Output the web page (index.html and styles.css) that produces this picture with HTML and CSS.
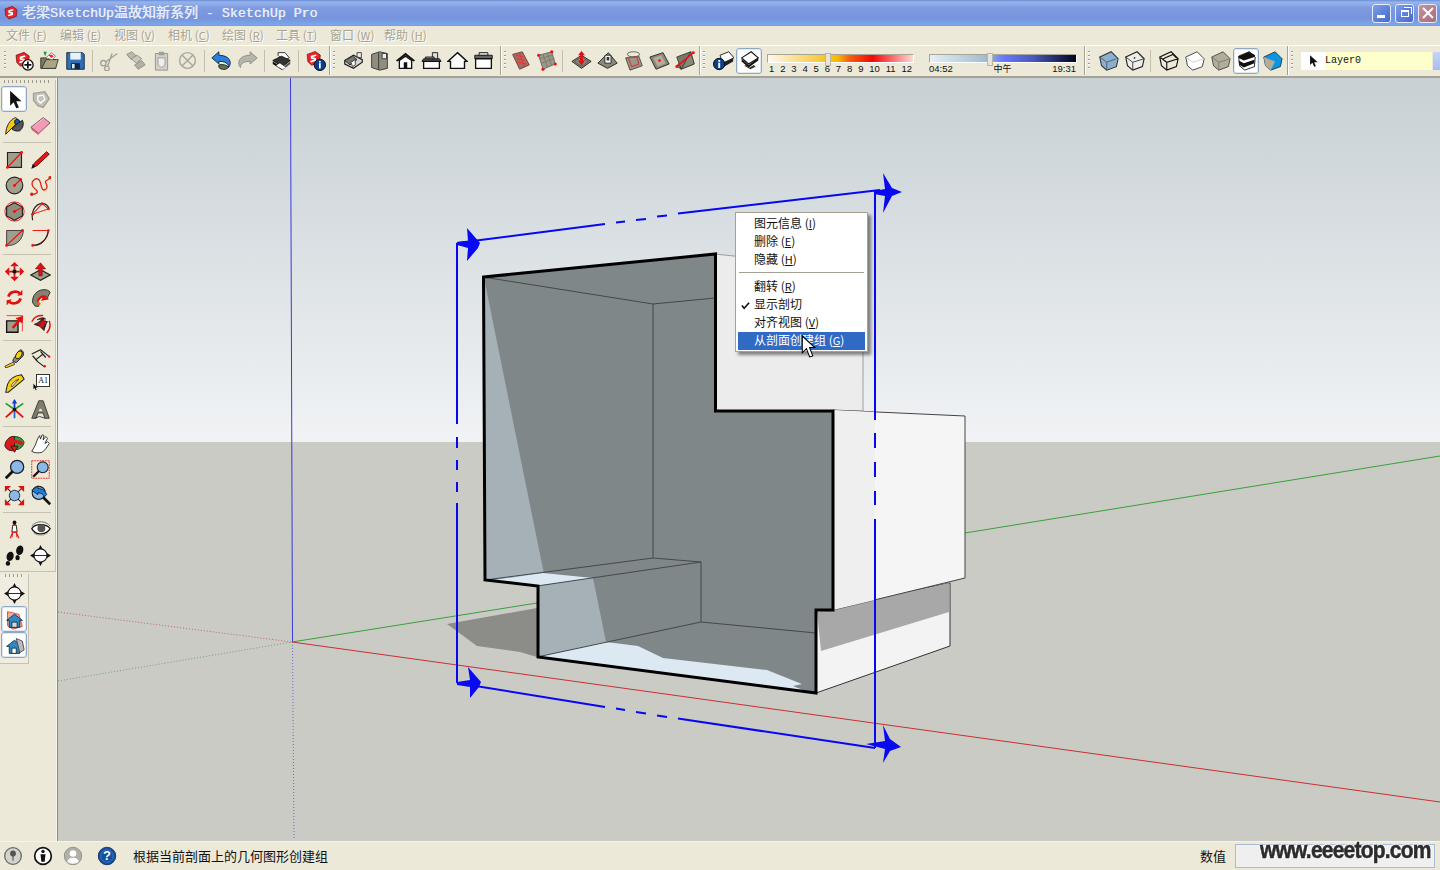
FILE: index.html
```html
<!DOCTYPE html>
<html lang="zh">
<head>
<meta charset="utf-8">
<title>老梁SketchUp温故知新系列 - SketchUp Pro</title>
<link rel="stylesheet" href="styles.css">
</head>
<body>
<svg class="defs" aria-hidden="true">
  <defs>
    <symbol id="su" viewBox="0 0 24 24"><path d="M3 6 14 2 21 7 20 17 9 21 4 16Z" fill="#e8242a" stroke="#7c1010"/><path d="M8 8 15 6 16 8 10 10 15 11 15 15 8 17 7 15 13 13 8 12Z" fill="#fff"/></symbol>
    <symbol id="new" viewBox="0 0 24 24"><use href="#su" width="20" height="20" x="1" y="1"/><circle cx="17" cy="17" r="6" fill="#fff" stroke="#111" stroke-width="1.5"/><path d="M17 13v8M13 17h8" stroke="#111" stroke-width="2"/></symbol>
    <symbol id="open" viewBox="0 0 24 24"><path d="M2 9h6l2 2h9v10H2Z" fill="#7d7a5a" stroke="#333"/><path d="M8 11 22 11 19 21H3Z" fill="#a9a57e" stroke="#333"/><path d="M8 9 14 3l5 4-4 4Z" fill="#fff" stroke="#777"/><path d="M11 6l3 3 3-2-3-2Z" fill="#e22"/><path d="M5 2l2 5 2-5Z" fill="#2a8c3c"/></symbol>
    <symbol id="save" viewBox="0 0 24 24"><path d="M2 3h18l2 2v17H2Z" fill="#2f6fb5" stroke="#123"/><path d="M6 3h12v8H6Z" fill="#e8f2f8"/><path d="M7 15h10v7H7Z" fill="#0c2746"/><path d="M8 16h3v5H8Z" fill="#dfe8ee"/></symbol>
    <symbol id="cut" viewBox="0 0 24 24" fill="none" stroke="#a3a39a" stroke-width="1.6"><circle cx="5" cy="15" r="3"/><circle cx="9" cy="21" r="2.6"/><path d="M7 14 21 4M10 18 15 4"/></symbol>
    <symbol id="copy" viewBox="0 0 24 24"><path d="M2 5 8 2l5 5-6 4Z" fill="#b9b9ae" stroke="#8a8a80"/><path d="M7 10l7-4 5 4-6 5Z" fill="#c9c9bf" stroke="#8a8a80"/><path d="M11 17l8-5 4 5-8 5Z" fill="#b0b0a5" stroke="#8a8a80"/></symbol>
    <symbol id="paste" viewBox="0 0 24 24"><path d="M5 4h14v19H5Z" fill="#d0d0c6" stroke="#8f8f85"/><path d="M9 2h6v4H9Z" fill="#9e9e94"/><path d="M8 9h8v8l-4 3-4-3Z" fill="#eee" stroke="#999"/></symbol>
    <symbol id="del" viewBox="0 0 24 24" fill="none" stroke="#a9a99f" stroke-width="1.7"><circle cx="12" cy="12" r="9"/><path d="M6 6 18 18M18 6 6 18"/></symbol>
    <symbol id="undo" viewBox="0 0 24 24"><path d="M1 9 9 2v4c7 0 13 3 13 9 0 2-1 4-2 5 0-5-4-7-11-7v3Z" fill="#2b7fd8" stroke="#123"/><path d="M9 17c5-1 9 0 11 3-3 3-8 3-11 0Z" fill="#5f6f4f" stroke="#222"/></symbol>
    <symbol id="redo" viewBox="0 0 24 24"><path d="M23 9 15 2v4C8 6 2 9 2 15c0 2 1 4 2 5 0-5 4-7 11-7v3Z" fill="#b6b6ae" stroke="#8a8a82"/></symbol>
    <symbol id="print" viewBox="0 0 24 24"><path d="M8 3h8l5 6-7 3-6-6Z" fill="#fff" stroke="#222"/><path d="M2 12 12 7l10 5-9 7Z" fill="#333" stroke="#111"/><path d="M2 13l11 7v3L2 16Z" fill="#111"/><path d="M13 20l9-7v3l-9 7Z" fill="#555"/><path d="M6 18l7 4 4-2-7-5Z" fill="#fff"/></symbol>
    <symbol id="suinfo" viewBox="0 0 24 24"><use href="#su" width="20" height="20" x="0" y="0"/><circle cx="17" cy="17" r="6.5" fill="#0c3f8a" stroke="#001"/><rect x="16" y="15" width="2" height="6" fill="#fff"/><rect x="16" y="12.5" width="2" height="1.8" fill="#fff"/></symbol>
    <symbol id="viso" viewBox="0 0 24 24"><path d="M2 12 12 6l10 5v3L12 21 2 16Z" fill="#d8d8cf" stroke="#222" stroke-width="1.4"/><path d="M2 12 11 7l5 4-8 6Z" fill="#777" stroke="#222"/><path d="M16 3h5v6l-5-1Z" fill="#eee" stroke="#333"/><path d="M9 14l5-3v6l-3 2Z" fill="#fff" stroke="#333"/></symbol>
    <symbol id="vside" viewBox="0 0 24 24"><path d="M3 5 12 2 21 4V21L12 23 3 20Z" fill="#8e8d7e" stroke="#333"/><path d="M11 3v19" stroke="#333"/><path d="M15 4h5v6h-5Z" fill="#eee" stroke="#333"/></symbol>
    <symbol id="vfront" viewBox="0 0 24 24"><path d="M1 12 12 3l11 9-2 1-9-7-9 7Z" fill="#111"/><path d="M5 12 12 7l7 5v9H5Z" fill="#fff" stroke="#111" stroke-width="1.5"/><path d="M10 14h4v7h-4Z" fill="#111"/></symbol>
    <symbol id="vtop" viewBox="0 0 24 24"><path d="M3 10h18l2 3H1Z" fill="#555" stroke="#111"/><path d="M3 13h18v8H3Z" fill="#fff" stroke="#111" stroke-width="1.5"/><path d="M13 3h6v7h-6Z" fill="#ddd" stroke="#111"/><path d="M5 8h10v2H5Z" fill="#999" stroke="#111"/></symbol>
    <symbol id="vhouse" viewBox="0 0 24 24"><path d="M12 3 23 13h-3v8H4v-8H1Z" fill="#fff" stroke="#111" stroke-width="1.6"/></symbol>
    <symbol id="vbox" viewBox="0 0 24 24"><path d="M2 6h20v4H2Z" fill="#666" stroke="#111"/><path d="M3 10h18v11H3Z" fill="#fff" stroke="#111" stroke-width="1.5"/><path d="M7 3h10v3H7Z" fill="#ddd" stroke="#111"/></symbol>
    <symbol id="sbmesh" viewBox="0 0 24 24"><path d="M3 5 14 2l8 15-11 5Z" fill="#a86a62" stroke="#6b3a36"/><path d="M7 6l8 2M8 10l9 2M9 14l10 2M11 4l5 15" stroke="#e33" stroke-width="1.2"/></symbol>
    <symbol id="sbgrid" viewBox="0 0 24 24"><path d="M3 6 18 2l4 14-14 6Z" fill="#9c9a86" stroke="#666"/><path d="M8 5l5 14M13 4l5 14M4 10l15-4M6 15l15-5" stroke="#77776a"/><g fill="#e11"><circle cx="3" cy="6" r="1.8"/><circle cx="18" cy="2" r="1.8"/><circle cx="22" cy="16" r="1.8"/><circle cx="8" cy="22" r="1.8"/></g></symbol>
    <symbol id="sbup" viewBox="0 0 24 24"><path d="M1 13 12 6l11 7-11 8Z" fill="#8a8878" stroke="#222"/><path d="M4 13 12 8l8 5-8 6Z" fill="none" stroke="#555"/><path d="M12 1l4 5h-2.500v6H16l-4 6-4-6h2.500V6H8Z" fill="#e01010"/></symbol>
    <symbol id="sbflip" viewBox="0 0 24 24"><path d="M1 15 13 3l10 12-11 6Z" fill="#8a8878" stroke="#222"/><path d="M9 6h7v9H9Z" fill="#fff" stroke="#222"/><path d="M11 8h3v4h-3Z" fill="#333"/></symbol>
    <symbol id="sbdrape" viewBox="0 0 24 24"><path d="M3 9 18 7l4 11-14 5Z" fill="#9a9788" stroke="#444"/><ellipse cx="12" cy="5" rx="7" ry="3" fill="none" stroke="#555"/><path d="M6 9l10-1 2 8-8 3Z" fill="none" stroke="#c44" stroke-width="1.4"/></symbol>
    <symbol id="sbdetail" viewBox="0 0 24 24"><path d="M1 8 16 3l7 13-15 6Z" fill="#8a8878" stroke="#222"/><path d="M5 9l9-3 5 9-9 4Z" fill="#b1ad9a"/><circle cx="12" cy="12" r="1.500" fill="#e11"/></symbol>
    <symbol id="sbedge" viewBox="0 0 24 24"><path d="M2 18 18 2l4 14-15 6Z" fill="#8a8878" stroke="#222"/><path d="M2 8 18 2 7 22Z" fill="#7a7869" stroke="#333"/><path d="M2 19 21 3" stroke="#e11" stroke-width="1.8"/><circle cx="2" cy="19" r="1.700" fill="#e11"/><circle cx="21" cy="3" r="1.700" fill="#e11"/></symbol>
    <symbol id="shinfo" viewBox="0 0 24 24"><path d="M8 6 18 2l6 7-13 6Z" fill="#fff" stroke="#111"/><path d="M9 16l14-7v4l-12 7Z" fill="#222"/><circle cx="7" cy="16" r="6.500" fill="#0c3f8a" stroke="#001"/><rect x="6" y="14.500" width="2.200" height="6" fill="#fff"/><rect x="6" y="11.500" width="2.200" height="2" fill="#fff"/></symbol>
    <symbol id="shadow" viewBox="0 0 24 24"><path d="M3 9 14 2l8 7-11 7Z" fill="#fff" stroke="#111" stroke-width="1.300"/><path d="M3 10l8 7v3L3 13ZM11 17l11-8v3l-11 8Z" fill="#111"/><path d="M6 18l7 4 6-3-2-2-5 3-4-3Z" fill="#333"/></symbol>
    <symbol id="cubeblue" viewBox="0 0 24 24"><path d="M2 8 15 2l8 8-2 9-11 4-6-5Z" fill="#8ab0cf" stroke="#333" stroke-width="1.200"/><path d="M2 8 10 14l11-4M10 14v9" fill="none" stroke="#556"/></symbol>
    <symbol id="cubewhite" viewBox="0 0 24 24"><path d="M2 8 15 2l8 8-2 9-11 4-6-5Z" fill="#eeeeea" stroke="#222" stroke-width="1.300"/><path d="M2 8 10 14l13-4M10 14v9" fill="none" stroke="#333"/><circle cx="12" cy="9" r="1" fill="#333"/></symbol>
    <symbol id="cubewire" viewBox="0 0 24 24"><path d="M2 8 15 2l8 8-2 9-11 4-6-5Z M2 8 10 14l13-4M10 14v9M6 10l11-5 4 4" fill="none" stroke="#111" stroke-width="1.300"/></symbol>
    <symbol id="cubehid" viewBox="0 0 24 24"><path d="M2 8 15 2l8 8-2 9-11 4-6-5Z" fill="#fff" stroke="#333" stroke-width="1"/><path d="M2 8 10 14l13-4" fill="none" stroke="#ccc"/></symbol>
    <symbol id="cubegray" viewBox="0 0 24 24"><path d="M2 8 15 2l8 8-2 9-11 4-6-5Z" fill="#b1ad98" stroke="#444"/><path d="M2 8 10 14l13-4M10 14v9" fill="none" stroke="#777"/></symbol>
    <symbol id="cubestripe" viewBox="0 0 24 24"><path d="M3 7 15 2l7 6-1 11-11 4-6-5Z" fill="#fff" stroke="#111"/><path d="M3 7 15 2l7 4-1 2-12 4-6-3ZM3 12l6 3 12-4v4L9 20l-5-3Z" fill="#111"/></symbol>
    <symbol id="cubemono" viewBox="0 0 24 24"><path d="M2 8 15 2l8 8-2 9-11 4-6-5Z" fill="#0c95e0" stroke="#333"/><path d="M2 8 15 13 10 23 4 18Z" fill="#b1ad98"/></symbol>
    <symbol id="arrow" viewBox="0 0 24 24"><path d="M7 2v17l4-4 3 7 3-1-3-7h6Z" fill="#111"/></symbol>
    <symbol id="comp" viewBox="0 0 24 24"><path d="M4 5 17 3l5 8-7 10-6-2-5-6Z" fill="#c2c2b8" stroke="#9f9f95" stroke-width="1.500"/><path d="M9 8l6-1 2 5-5 4-3-3Z" fill="none" stroke="#fff" stroke-width="1.500"/></symbol>
    <symbol id="paint" viewBox="0 0 24 24"><path d="M2 22c0-9 5-17 11-19 3 1 3 3 3 5l-8 8Z" fill="#f3c71a" stroke="#111"/><circle cx="15" cy="8" r="3" fill="#1858b8" stroke="#111"/><path d="M14 11l7-5c2 4 1 9-3 12-3 1-7 0-9-2Z" fill="#555" stroke="#111"/></symbol>
    <symbol id="erase" viewBox="0 0 24 24"><path d="M1 14 15 3l8 6L10 21Z" fill="#f39ab6" stroke="#7c4a58"/><path d="M1 14l9 7v2L2 17Z" fill="#c66"/><path d="M5 12 16 4" stroke="#fbd" fill="none"/></symbol>
    <symbol id="rect" viewBox="0 0 24 24"><path d="M4 4h16v17H4Z" fill="#a09f8c" stroke="#222" stroke-width="1.300"/><path d="M4 21 20 4" stroke="#e11" stroke-width="1.400"/><circle cx="4" cy="21" r="1.700" fill="#e11"/><circle cx="20" cy="4" r="1.700" fill="#e11"/></symbol>
    <symbol id="pencil" viewBox="0 0 24 24"><path d="M2 22 5 16 19 3l3 3L8 19Z" fill="#e11" stroke="#411"/><path d="M2 22l1-5 3 3Z" fill="#111"/></symbol>
    <symbol id="circle" viewBox="0 0 24 24"><circle cx="12" cy="12" r="9.500" fill="#a09f8c" stroke="#222" stroke-width="1.300"/><path d="M12 12 19 5" stroke="#e11" stroke-width="1.300"/><circle cx="12" cy="12" r="1.700" fill="#e11"/><circle cx="19" cy="5" r="1.700" fill="#e11"/></symbol>
    <symbol id="free" viewBox="0 0 24 24" fill="none" stroke="#d21" stroke-width="1.500"><path d="M2 22c7 0 8-3 4-6S1 9 4 6s7-2 8 3 2 9 5 8 3-5 1-8 4-3 5-6"/><circle cx="2" cy="22" r="1.200" fill="#e11"/><circle cx="23" cy="3" r="1.200" fill="#e11"/></symbol>
    <symbol id="poly" viewBox="0 0 24 24"><circle cx="12" cy="12" r="11" fill="none" stroke="#e11"/><path d="M12 2 21 7v10l-9 5-9-5V7Z" fill="#8f8e7c" stroke="#222" stroke-width="1.300"/><path d="M12 12 21 7" stroke="#e11" stroke-width="1.200"/><circle cx="12" cy="12" r="1.700" fill="#e11"/></symbol>
    <symbol id="arc1" viewBox="0 0 24 24"><path d="M3 22C1 12 6 3 14 3c4 0 7 3 8 6" fill="none" stroke="#222" stroke-width="1.300"/><path d="M3 15 14 3l7 6Z" fill="none" stroke="#e11" stroke-width="1.200"/><circle cx="14" cy="3" r="1.500" fill="#e11"/><circle cx="21" cy="9" r="1.500" fill="#e11"/><circle cx="3" cy="15" r="1.500" fill="#e11"/></symbol>
    <symbol id="arc2" viewBox="0 0 24 24"><path d="M3 4H22C22 14 14 21 6 21H3Z" fill="#a09f8c" stroke="#333"/><path d="M3 21 21 4" stroke="#e11" stroke-width="1.300"/><circle cx="3" cy="21" r="1.600" fill="#e11"/><circle cx="21" cy="4" r="1.600" fill="#e11"/></symbol>
    <symbol id="arc3" viewBox="0 0 24 24"><path d="M3 21H6C14 21 20 13 21 4H3" fill="none" stroke="#e11" stroke-width="1.100"/><path d="M3 21C12 21 20 14 21 4" fill="none" stroke="#222" stroke-width="1.400"/><circle cx="3" cy="21" r="1.500" fill="#e11"/><circle cx="21" cy="4" r="1.500" fill="#e11"/></symbol>
    <symbol id="move" viewBox="0 0 24 24" fill="#e01010"><path d="M12 1l5 5H7ZM12 23l5-5H7ZM1 12l5-5v10ZM23 12l-5-5v10Z"/><path d="M11 6h2v12h-2ZM6 11h12v2H6Z" fill="#c01010"/><path d="M10 10h4v4h-4Z" fill="#111"/></symbol>
    <symbol id="push" viewBox="0 0 24 24"><path d="M1 16 12 10l11 6-11 6Z" fill="#a09f8c" stroke="#222" stroke-width="1.300"/><path d="M12 2l6 7h-4v8h-4V9H6Z" fill="#e01010" stroke="#411" stroke-width=".5"/></symbol>
    <symbol id="rotate" viewBox="0 0 24 24" fill="none" stroke="#e01010" stroke-width="3"><path d="M5 11a8 7 0 0 1 13-4M19 13a8 7 0 0 1-13 4"/><path d="M15 10l6-1V3ZM9 14l-6 1v6Z" fill="#e01010" stroke="none"/></symbol>
    <symbol id="follow" viewBox="0 0 24 24"><path d="M3 18C2 10 8 3 16 3c3 0 6 1 7 3l-3 6c-4-2-9-1-11 5l1 5H6Z" fill="#85836f" stroke="#222"/><path d="M9 16c1-4 5-6 8-5l-2 3 6-1" fill="none" stroke="#e01010" stroke-width="2.500"/><circle cx="10" cy="19" r="2" fill="#e60"/></symbol>
    <symbol id="scale" viewBox="0 0 24 24"><path d="M3 9h13v13H3Z" fill="#a09f8c" stroke="#111" stroke-width="1.500"/><path d="M3 3h18v18" fill="none" stroke="#e33"/><path d="M9 16 16 8l-3-2 9-3-1 9-3-2-7 8Z" fill="#e01010"/></symbol>
    <symbol id="offset" viewBox="0 0 24 24"><path d="M2 10C4 5 10 2 15 3M22 9c2 6 0 11-3 14" fill="none" stroke="#e01010" stroke-width="1.600"/><path d="M8 8c4-3 8-3 10-1M18 9c1 3 0 6-2 9M5 13l6 2 5 5 1-7 3-3-5-1 1-3-7 5Z" fill="#8f2020" stroke="#111"/><path d="M11 14l7-7-2 6 2 1-6 2Z" fill="#e01010"/></symbol>
    <symbol id="tape" viewBox="0 0 24 24"><path d="M11 13 19 3c3 1 4 4 3 7l-8 8-4-2Z" fill="#8c8b77" stroke="#222"/><ellipse cx="17" cy="9" rx="3" ry="5" transform="rotate(30 17 9)" fill="#f3d11a" stroke="#111"/><path d="M1 22 11 17l1 3-10 4Z" fill="#f3d11a" stroke="#333"/></symbol>
    <symbol id="dim" viewBox="0 0 24 24" fill="none" stroke="#222" stroke-width="1.400"><path d="M2 8 12 3l10 8M6 15l9-7M3 10l6 7M12 5l6 7M9 17l8 6"/><circle cx="22" cy="11" r="1.300" fill="#e11" stroke="none"/><circle cx="17" cy="22" r="1.300" fill="#e11" stroke="none"/></symbol>
    <symbol id="proto" viewBox="0 0 24 24"><path d="M2 22 4 13C6 7 12 3 20 2l3 5-18 15Z" fill="#f3d11a" stroke="#222" stroke-width="1.200"/><path d="M8 15c1-3 4-6 9-8l-8 9Z" fill="#eee" stroke="#222" stroke-width=".8"/></symbol>
    <symbol id="axes" viewBox="0 0 24 24" stroke-width="2"><path d="M12 12 2 5" stroke="#2a9c35"/><path d="M12 12 22 5" stroke="#2a9c35"/><path d="M12 12 2 21" stroke="#e01010"/><path d="M12 12 22 21" stroke="#e01010"/><path d="M12 12V2" stroke="#0a3dd8"/><path d="M12 12v10" stroke="#1a6ad8"/><path d="M12 0l3 5H9Z" fill="#0a3dd8"/><circle cx="12" cy="12" r="2" fill="#111"/></symbol>
    <symbol id="text3d" viewBox="0 0 24 24"><path d="M2 22 10 2h5l7 20h-5l-2-6H9l-2 6Z" fill="#7f7e6e" stroke="#333"/><path d="M11 11h2l1 3h-4Z" fill="#e8e5d8"/><path d="M5 22l6-2 6 2" stroke="#333" fill="none"/></symbol>
    <symbol id="orbit" viewBox="0 0 24 24"><path d="M1 14C2 7 8 3 12 4v16C7 21 2 19 1 14Z" fill="#d81c1c" stroke="#311"/><path d="M12 4c6 0 10 3 11 7-1 4-4 7-8 8l-3-1Z" fill="#2f9c45" stroke="#131"/><path d="M3 9c4-2 16-2 19 2l-2 3c-5-3-12-3-16-1Z" fill="#d81c1c"/><path d="M12 22l4-7H8Z" fill="#d81c1c" stroke="#311"/></symbol>
    <symbol id="hand" viewBox="0 0 24 24"><path d="M2 21 6 14 9 6l2-3 1 4 2-5 2 1-1 5 3-4 2 2-3 6 3-2 2 2-4 6-4 4c-4 1-9 1-12-1Z" fill="#fff" stroke="#222"/></symbol>
    <symbol id="zoom" viewBox="0 0 24 24"><circle cx="15" cy="9" r="7.500" fill="#8ab8e8" stroke="#222" stroke-width="1.500"/><path d="M10 14 2 22" stroke="#111" stroke-width="3.200"/></symbol>
    <symbol id="zoomw" viewBox="0 0 24 24"><path d="M2 2h20v20H2Z" fill="none" stroke="#e11" stroke-dasharray="2 1"/><use href="#zoom" width="20" height="20" x="2" y="2"/></symbol>
    <symbol id="zoome" viewBox="0 0 24 24"><circle cx="12" cy="12" r="6" fill="#8ab8e8" stroke="#222"/><g stroke="#111" stroke-width="1.200"><path d="M8 8 2 2M16 8l6-6M8 16l-6 6M16 16l6 6"/></g><g fill="#e01010"><path d="M1 1h7L1 8ZM23 1h-7l7 7ZM1 23h7l-7-7ZM23 23h-7l7-7Z"/></g></symbol>
    <symbol id="zoomp" viewBox="0 0 24 24"><circle cx="10" cy="9" r="7.500" fill="#8ab8e8" stroke="#222" stroke-width="1.300"/><path d="M15 14l8 8" stroke="#111" stroke-width="3"/><path d="M2 6 9 1v3c5 0 9 3 10 7l-3 3c0-3-3-5-7-5v2Z" fill="#1f7fdc" stroke="#123"/></symbol>
    <symbol id="person" viewBox="0 0 24 24"><path d="M9 21 12 3l3 18" fill="none" stroke="#e11" stroke-width="1.200"/><circle cx="12" cy="4" r="2.200" fill="#111"/><path d="M10 7h4l1 8h-6Z" fill="#fff" stroke="#111"/><path d="M7 22l3-7h4l3 7" fill="none" stroke="#e11" stroke-width="1.200"/></symbol>
    <symbol id="eye" viewBox="0 0 24 24"><path d="M2 11C6 5 18 5 23 11c-4 7-16 9-21 0Z" fill="#fff" stroke="#111" stroke-width="1.400"/><circle cx="13" cy="10.500" r="4.500" fill="#555"/><path d="M2 8C8 1 18 2 23 8" stroke="#666" fill="none"/><path d="M4 16c6 4 13 3 17-1" stroke="#999" fill="none"/></symbol>
    <symbol id="feet" viewBox="0 0 24 24" fill="#111"><ellipse cx="7" cy="13" rx="4" ry="5.500" transform="rotate(15 7 13)"/><ellipse cx="4.500" cy="21" rx="2.500" ry="2.800"/><ellipse cx="18" cy="6" rx="4" ry="5.500" transform="rotate(15 18 6)"/><ellipse cx="15.500" cy="14.500" rx="2.500" ry="3"/></symbol>
    <symbol id="sect" viewBox="0 0 24 24"><path d="M12 0l3 6h-6ZM12 24l3-6H9ZM0 12l5-3v6ZM24 12l-5-3v6Z" fill="#111"/><circle cx="12" cy="12" r="7.500" fill="#fff" stroke="#111" stroke-width="1.300"/><path d="M4 12h16" stroke="#111"/></symbol>
    <symbol id="sshow" viewBox="0 0 24 24"><path d="M4 3 17 6l4 14-11 3-6-4Z" fill="#f0a898" stroke="#d05040"/><path d="M3 13 12 6l9 7h-3v8H6v-8Z" fill="#2f86c8" stroke="#133"/><path d="M9 15h6v6H9Z" fill="#cfd8df" stroke="#133"/></symbol>
    <symbol id="scut" viewBox="0 0 24 24"><path d="M3 13 12 6l9 7h-3v8H6v-8Z" fill="#2f86c8" stroke="#133"/><path d="M14 4l7 3 2 10-5 3Z" fill="#bbb" stroke="#444"/><path d="M9 15h5v6H9Z" fill="#fff" stroke="#133"/></symbol>
    <symbol id="geo" viewBox="0 0 24 24"><circle cx="12" cy="12" r="10" fill="#d4d4cc" stroke="#666" stroke-width="1.500"/><circle cx="12" cy="9" r="3.500" fill="#555"/><path d="M11 9h2l-.5 9h-1Z" fill="#555"/></symbol>
    <symbol id="cred" viewBox="0 0 24 24"><circle cx="12" cy="12" r="10" fill="#fff" stroke="#111" stroke-width="2"/><circle cx="12" cy="6.500" r="2" fill="#111"/><path d="M9 10h6l-1 9h-4Z" fill="#111"/></symbol>
    <symbol id="user" viewBox="0 0 24 24"><circle cx="12" cy="12" r="10.500" fill="#b0b0a8" stroke="#888"/><circle cx="12" cy="9" r="4" fill="#fff"/><path d="M5 19c1-4 4-5 7-5s6 1 7 5c-3 3-11 3-14 0Z" fill="#fff"/></symbol>
    <symbol id="help" viewBox="0 0 24 24"><circle cx="12" cy="12" r="10.500" fill="#14509e" stroke="#0a2a66"/><circle cx="12" cy="12" r="7.500" fill="none" stroke="#4a86cc" stroke-width=".8"/></symbol>
    <symbol id="chk" viewBox="0 0 10 10"><path d="M1 5l2.500 3L9 2" fill="none" stroke="#111" stroke-width="1.800"/></symbol>
  </defs>
</svg>

<header class="titlebar">
  <svg class="ti"><use href="#su"/></svg>
  <h1 class="ttl">老梁<span class="lat">SketchUp</span>温故知新系列<span class="lat"> - SketchUp Pro</span></h1>
  <div class="wbtns">
    <button class="wb blue"><span class="g-min"></span></button>
    <button class="wb blue"><span class="g-res"></span></button>
    <button class="wb red"><svg viewBox="0 0 12 12" class="g-x"><path d="M1 1l10 10M11 1 1 11" stroke="#fff" stroke-width="2"/></svg></button>
  </div>
</header>

<nav class="menubar">
  <span class="mi">文件 (<u>F</u>)</span><span class="mi">编辑 (<u>E</u>)</span><span class="mi">视图 (<u>V</u>)</span><span class="mi">相机 (<u>C</u>)</span><span class="mi">绘图 (<u>R</u>)</span><span class="mi">工具 (<u>T</u>)</span><span class="mi">窗口 (<u>W</u>)</span><span class="mi">帮助 (<u>H</u>)</span>
</nav>

<div class="toolbar">
  <div class="tg g1">
    <i class="grip"></i>
    <span class="b"><svg><use href="#new"/></svg></span><span class="b"><svg><use href="#open"/></svg></span><span class="b"><svg><use href="#save"/></svg></span>
    <i class="sep"></i>
    <span class="b"><svg><use href="#cut"/></svg></span><span class="b"><svg><use href="#copy"/></svg></span><span class="b"><svg><use href="#paste"/></svg></span><span class="b"><svg><use href="#del"/></svg></span>
    <i class="sep"></i>
    <span class="b"><svg><use href="#undo"/></svg></span><span class="b"><svg><use href="#redo"/></svg></span>
    <i class="sep"></i>
    <span class="b"><svg><use href="#print"/></svg></span>
    <i class="sep"></i>
    <span class="b"><svg><use href="#suinfo"/></svg></span>
  </div>
  <div class="tg g2">
    <i class="grip"></i>
    <span class="b"><svg><use href="#viso"/></svg></span><span class="b"><svg><use href="#vside"/></svg></span><span class="b"><svg><use href="#vfront"/></svg></span><span class="b"><svg><use href="#vtop"/></svg></span><span class="b"><svg><use href="#vhouse"/></svg></span><span class="b"><svg><use href="#vbox"/></svg></span>
  </div>
  <div class="tg g3">
    <i class="grip"></i>
    <span class="b"><svg><use href="#sbmesh"/></svg></span><span class="b"><svg><use href="#sbgrid"/></svg></span>
    <i class="sep"></i>
    <span class="b"><svg><use href="#sbup"/></svg></span><span class="b"><svg><use href="#sbflip"/></svg></span><span class="b"><svg><use href="#sbdrape"/></svg></span><span class="b"><svg><use href="#sbdetail"/></svg></span><span class="b"><svg><use href="#sbedge"/></svg></span>
  </div>
  <div class="tg g4">
    <i class="grip"></i>
    <span class="b"><svg><use href="#shinfo"/></svg></span><span class="b on"><svg><use href="#shadow"/></svg></span>
    <div class="slider s-month">
      <div class="track"><i class="thumb"></i></div>
      <div class="nums"><span>1</span><span>2</span><span>3</span><span>4</span><span>5</span><span>6</span><span>7</span><span>8</span><span>9</span><span>10</span><span>11</span><span>12</span></div>
    </div>
    <div class="slider s-time">
      <div class="track"><i class="thumb"></i></div>
      <div class="nums"><span>04:52</span><span class="noon">中午</span><span>19:31</span></div>
    </div>
  </div>
  <div class="tg g5">
    <i class="grip"></i>
    <span class="b"><svg><use href="#cubeblue"/></svg></span><span class="b"><svg><use href="#cubewhite"/></svg></span>
    <i class="sep"></i>
    <span class="b"><svg><use href="#cubewire"/></svg></span><span class="b"><svg><use href="#cubehid"/></svg></span><span class="b"><svg><use href="#cubegray"/></svg></span><span class="b on"><svg><use href="#cubestripe"/></svg></span><span class="b"><svg><use href="#cubemono"/></svg></span>
  </div>
  <div class="tg g6">
    <i class="grip"></i>
    <div class="layer">
      <span class="larrow"><svg><use href="#arrow"/></svg></span>
      <span class="lname">Layer0</span>
    </div>
    <span class="ldrop"></span>
  </div>
</div>

<main class="work">
  <aside class="side">
    <div class="palette large">
      <i class="hgrip"></i>
      <div class="rows">
        <span class="b on"><svg><use href="#arrow"/></svg></span><span class="b"><svg><use href="#comp"/></svg></span>
        <span class="b"><svg><use href="#paint"/></svg></span><span class="b"><svg><use href="#erase"/></svg></span>
        <i class="hsep"></i>
        <span class="b"><svg><use href="#rect"/></svg></span><span class="b"><svg><use href="#pencil"/></svg></span>
        <span class="b"><svg><use href="#circle"/></svg></span><span class="b"><svg><use href="#free"/></svg></span>
        <span class="b"><svg><use href="#poly"/></svg></span><span class="b"><svg><use href="#arc1"/></svg></span>
        <span class="b"><svg><use href="#arc2"/></svg></span><span class="b"><svg><use href="#arc3"/></svg></span>
        <i class="hsep"></i>
        <span class="b"><svg><use href="#move"/></svg></span><span class="b"><svg><use href="#push"/></svg></span>
        <span class="b"><svg><use href="#rotate"/></svg></span><span class="b"><svg><use href="#follow"/></svg></span>
        <span class="b"><svg><use href="#scale"/></svg></span><span class="b"><svg><use href="#offset"/></svg></span>
        <i class="hsep"></i>
        <span class="b"><svg><use href="#tape"/></svg></span><span class="b"><svg><use href="#dim"/></svg></span>
        <span class="b"><svg><use href="#proto"/></svg></span><span class="b textb"><svg class="small"><use href="#arrow"/></svg><em>A1</em></span>
        <span class="b"><svg><use href="#axes"/></svg></span><span class="b"><svg><use href="#text3d"/></svg></span>
        <i class="hsep"></i>
        <span class="b"><svg><use href="#orbit"/></svg></span><span class="b"><svg><use href="#hand"/></svg></span>
        <span class="b"><svg><use href="#zoom"/></svg></span><span class="b"><svg><use href="#zoomw"/></svg></span>
        <span class="b"><svg><use href="#zoome"/></svg></span><span class="b"><svg><use href="#zoomp"/></svg></span>
        <i class="hsep"></i>
        <span class="b"><svg><use href="#person"/></svg></span><span class="b"><svg><use href="#eye"/></svg></span>
        <span class="b"><svg><use href="#feet"/></svg></span><span class="b"><svg><use href="#sect"/></svg></span>
      </div>
    </div>
    <div class="palette section">
      <i class="hgrip"></i>
      <span class="b"><svg><use href="#sect"/></svg></span>
      <span class="b on"><svg><use href="#sshow"/></svg></span>
      <span class="b on"><svg><use href="#scut"/></svg></span>
    </div>
  </aside>

  <div class="viewport">
    <svg class="scene" viewBox="58 78 1382 763" preserveAspectRatio="none">
      <defs>
        <linearGradient id="sky" x1="0" y1="0" x2="0" y2="1"><stop offset="0" stop-color="#c7d0d4"/><stop offset="1" stop-color="#f1f3f5"/></linearGradient>
      </defs>
      <rect x="58" y="78" width="1382" height="364" fill="url(#sky)"/>
      <rect x="58" y="442" width="1382" height="399" fill="#cbcbc6"/>
      <!-- axes -->
      <path d="M290.500 78 292.500 642" stroke="#3a3ad8" fill="none"/>
      <path d="M292.500 642 294 840" stroke="#6a6ad0" stroke-dasharray="1 2" fill="none"/>
      <path d="M292 642 1440 802" stroke="#c83030" fill="none"/>
      <path d="M58 612 292 642" stroke="#c86060" stroke-dasharray="1 2" fill="none"/>
      <path d="M292 642 537 603M965 533 1440 456" stroke="#3aa03a" fill="none"/>
      <path d="M58 681 292 642" stroke="#70a070" stroke-dasharray="1 2" fill="none"/>
      <!-- shadow on the ground -->
      <path d="M447 624 537 608V657L520 652 477 646Z" fill="#8c8c88"/>
      <!-- back wall -->
      <path d="M715 254 863 270V411H715Z" fill="#ececec" stroke="#8a8a8a" stroke-width=".8"/>
      <!-- lower box -->
      <path d="M816 611 950 583V646L816 693Z" fill="#f3f3f3" stroke="#333" stroke-width="1"/>
      <path d="M817 612 949 583V612L821 651Z" fill="#a8a8a8"/>
      <!-- upper box -->
      <path d="M833 410 965 416V578L833 610Z" fill="#f5f5f5" stroke="#444" stroke-width="1"/>
      <path d="M833 410 875 412V600L833 610Z" fill="#efefef"/>
      <!-- interior -->
      <path d="M483 277 715 254V411H833V610H816V693L538 657V585L485 580Z" fill="#7f8789"/>
      <path d="M484 278 544 574 485 580Z" fill="#a6b1b7"/>
      <path d="M493 580 543 573 593 578 537 586Z" fill="#dce9f3"/>
      <path d="M537 586 593 578 606 642 537 657Z" fill="#a6b1b7"/>
      <path d="M537 657 606 642 638 646 663 658 767 670 802 684 793 686 810 693Z" fill="#dce9f3"/>
      <g fill="none" stroke="#44494b" stroke-width="1">
        <path d="M483 277 653 304 715 298M653 304V558M485 580 653 558 701 562 537 586M701 562V622M537 657 701 622 816 633"/>
      </g>
      <!-- section outline -->
      <path d="M483.500 277 715.500 254V411H833V610H816V693L538 657V586L485 580Z" fill="none" stroke="#000" stroke-width="3"/>
      <!-- section plane -->
      <g fill="none" stroke="#0808f0" stroke-width="2">
        <path d="M457 243 605 224M616 222.500 625 221.500M636 220 646 219M657 216.500 667 215.500M678 213.500 880 190"/>
        <path d="M457 243V424M457 437V448M457 460V470M457 482V492M457 503V683"/>
        <path d="M875 190V420M875 433V448M875 462V477M875 491V505M875 519V748"/>
        <path d="M457 683 605 707M616 708.500 625 710M636 712 646 713.500M657 715.500 667 717M678 718.500 875 748"/>
      </g>
      <g fill="#0a0af2">
        <path d="M883 173 892 188 902 192 892 196 883 213 885 196 874 194V191L885 189Z"/>
        <path d="M467 228 480 243 478 248 467 261 468 248 457 245V242L468 241Z"/>
        <path d="M468 667 481 682 479 687 470 698 470 687 457 685V682L470 680Z"/>
        <path d="M883 725 890 739 901 747 890 751 883 763 885 749 866 744 885 741Z"/>
      </g>
    </svg>

    <div class="ctx">
      <div class="ci">图元信息 (<u>I</u>)</div>
      <div class="ci">删除 (<u>E</u>)</div>
      <div class="ci">隐藏 (<u>H</u>)</div>
      <div class="cs"></div>
      <div class="ci">翻转 (<u>R</u>)</div>
      <div class="ci"><svg class="chk"><use href="#chk"/></svg>显示剖切</div>
      <div class="ci">对齐视图 (<u>V</u>)</div>
      <div class="ci hot">从剖面创建组 (<u>G</u>)</div>
    </div>
    <svg class="cursor" viewBox="0 0 12 22"><path d="M1 1V17L5 13 8 21 11 20 8 12H13Z" fill="#fff" stroke="#000"/></svg>
  </div>
</main>

<footer class="status">
  <span class="si"><svg><use href="#geo"/></svg></span>
  <span class="si"><svg><use href="#cred"/></svg></span>
  <span class="si"><svg><use href="#user"/></svg></span>
  <span class="si help"><svg><use href="#help"/></svg><b>?</b></span>
  <span class="msg">根据当前剖面上的几何图形创建组</span>
  <span class="vlabel">数值</span>
  <div class="vbox"><span class="wm">www.eeeetop.com</span></div>
</footer>
</body>
</html>
```
FILE: styles.css
```css
* { box-sizing: border-box; }
html, body { margin: 0; padding: 0; }
body {
  width: 1440px; height: 870px; overflow: hidden;
  display: flex; flex-direction: column;
  background: #ece9d8;
  font-family: "Noto Sans CJK SC", "Liberation Sans", sans-serif;
  font-size: 12px; color: #111;
}
.defs { width: 0; height: 0; position: absolute; }

/* title bar */
.titlebar {
  height: 26px; flex: none; display: flex; align-items: center; padding: 0 3px 0 3px;
  background: linear-gradient(#6a8ed8 0, #98b4ec 8%, #7f9ce2 30%, #7694dc 70%, #7ba6ea 95%, #6d9be4 100%);
}
.ti { width: 16px; height: 16px; flex: none; margin-right: 3px; }
.ttl { margin: 0; font-size: 14px; font-weight: 400; color: #e6ecf8; white-space: pre; line-height: 26px;
  font-family: "Liberation Mono", "Noto Sans CJK SC", monospace; text-shadow: .3px 0 #e6ecf8; }
.lat { font-size: 13.3px; }
.wbtns { margin-left: auto; display: flex; gap: 4px; }
.wb { width: 19px; height: 19px; padding: 0; border: 1px solid #e6ecfa; border-radius: 3px; display: flex; align-items: center; justify-content: center; position: relative; }
.wb.blue { background: linear-gradient(135deg, #7d9fe8, #4468cf); }
.wb.red { background: linear-gradient(135deg, #c8929c, #a66a7c); }
.g-min { width: 8px; height: 3px; background: #fff; margin: 7px 0 0 -2px; }
.g-res { width: 8px; height: 7px; border: 1px solid #fff; border-top-width: 2px; box-shadow: 2px -2px 0 -0px #5b7cd8, 3px -3px 0 0 #fff; }
.g-x { width: 12px; height: 12px; }

/* menu */
.menubar { height: 19px; flex: none; display: flex; padding-left: 6px; align-items: flex-start; background: #ece9d8; }
.mi { width: 54px; flex: none; color: #a6a391; text-shadow: 1px 1px 0 #fff; white-space: nowrap; line-height: 17px; font-size: 12px; }
.mi u { font-size: 11px; }

/* toolbar */
.toolbar {
  height: 33px; flex: none; display: flex; background: #ece9d8;
  border-top: 1px solid #fff; border-bottom: 2px solid #a5a294;
}
.tg { display: flex; align-items: center; height: 29px; position: relative; border-right: 1px solid #a5a294; box-shadow: 1px 0 0 #fff; flex: none; padding-left: 3px; }
.g1 { width: 330px; padding-left: 4px; }
.g2 { width: 171px; }
.g3 { width: 199px; }
.g4 { width: 385px; }
.g5 { width: 203px; }
.g6 { flex: 1; border-right: 0; box-shadow: none; }
.grip { width: 2px; height: 20px; flex: none;
  background: repeating-linear-gradient(#9c9a8c 0 1px, #fff 1px 2px, transparent 2px 4px); }
.b { width: 26px; height: 26px; flex: none; display: flex; align-items: center; justify-content: center; border: 1px solid transparent; border-radius: 3px; }
.b svg { width: 21px; height: 21px; display: block; }
.b.on { background: #fff; border-color: #8fa8c8; box-shadow: inset 0 0 0 1px #dfe8f2; }
.sep { width: 1px; height: 22px; background: #c2bfae; flex: none; }
.g1 .grip { margin-right: 4px; }
.g1 .sep { margin: 0 3px 0 4px; }
.g2 .grip { margin-right: 5px; }
.g3 .grip { margin-right: 1px; }
.g3 .sep { margin: 0 5px 0 3px; }
.g4 .grip { margin-right: 5px; }
.g5 .grip { margin-right: 5px; }
.g5 .sep { margin: 0 4px 0 3px; }
.g6 .grip { margin-right: 8px; }

/* sliders */
.slider { flex: none; position: relative; height: 28px; padding-top: 7px; }
.track { height: 9px; border: 1px solid #a8a594; border-right-color: #fff; border-bottom-color: #fff; position: relative; }
.thumb { position: absolute; width: 6px; height: 13px; top: -2px; background: #e8e5d8; border: 1px solid #b8b5a4; }
.nums { display: flex; justify-content: space-between; font: 9.500px/10px "Liberation Sans", sans-serif; color: #111; margin-top: 1px; }
.s-month { width: 147px; margin-left: 5px; }
.s-month .track { background: linear-gradient(90deg, #fdfaf0, #f6b800 48%, #f86010 56%, #f00808 72%, #ffd8d8 100%); }
.s-month .thumb { left: 57px; }
.s-month .nums { padding: 0 2px; }
.s-time { width: 148px; margin-left: 15px; }
.s-time .track { background: linear-gradient(90deg, #e6eff6, #a0bdd0 38%, #6878ff 50%, #4a5ac0 70%, #04041c 100%); }
.s-time .thumb { left: 57px; }
.noon { font: 9px/10px "Noto Sans CJK SC", sans-serif; }
.s-time .nums { padding: 0 1px 0 0; }

/* layer */
.layer { width: 131px; height: 18px; background: #fff; display: flex; flex: none; }
.larrow { width: 24px; display: flex; align-items: center; justify-content: center; }
.larrow svg { width: 14px; height: 14px; }
.lname { flex: 1; background: #ffffcc; font: 10px/18px "Liberation Mono", monospace; }
.ldrop { width: 8px; height: 18px; margin-left: 1px; background: linear-gradient(#c5d3f5, #a8bcf0); flex: none; }

/* work area */
.work { flex: 1; display: flex; min-height: 0; }
.side { width: 58px; flex: none; background: #ece9d8; border-right: 1px solid #8c8a7c; box-shadow: inset -1px 0 0 #f8f6ea; }
.palette { background: #ece9d8; }
.large { width: 56px; height: 492px; border-right: 1px solid #c5c2b2; padding: 0 1px; border-bottom: 1px solid #c5c2b2; }
.hgrip { display: block; height: 3px; margin: 2px 3px 3px; background: repeating-linear-gradient(90deg, #9c9a8c 0 1px, transparent 1px 4px); }
.rows { display: grid; grid-template-columns: 26px 26px; grid-auto-rows: auto; }
.hsep { grid-column: 1 / -1; height: 1px; background: #c5c2b2; align-self: center; }
.rows .b { height: 26px; }
.rows .hsep { margin: 4px 2px 3px; }
.section { width: 29px; height: 90px; padding: 0 1px; border-right: 1px solid #c5c2b2; background: #efece0; border-bottom: 1px solid #c5c2b2; }
.section .hgrip { margin: 2px 4px 3px; }
.textb { position: relative; }
.textb .small { width: 8px; height: 14px; margin: 8px 0 0 -10px; }
.textb em { position: absolute; right: 2px; top: 3px; font: 8px/11px "Liberation Serif", serif; background: #fff; border: 1px solid #333; padding: 0 1px; }

/* viewport */
.viewport { flex: 1; position: relative; min-width: 0; }
.scene { display: block; width: 100%; height: 100%; }
.ctx {
  position: absolute; left: 677px; top: 134px; width: 133px; height: 140px; padding: 2px;
  background: #fff; border: 1px solid #a5a294; box-shadow: 3px 3px 3px rgba(0,0,0,.45);
}
.ci { height: 18px; line-height: 16px; padding-left: 16px; position: relative; font-size: 12px; white-space: nowrap; }
.ci u { font-size: 11px; }
.cs { height: 1px; background: #a5a294; margin: 3px 1px 5px; }
.chk { position: absolute; left: 3px; top: 5px; width: 9px; height: 9px; }
.hot { background: #316ac5; color: #fff; }
.cursor { position: absolute; left: 743px; top: 257px; width: 13px; height: 23px; overflow: visible; }

/* status bar */
.status { height: 29px; flex: none; display: flex; align-items: center; background: #ece9d8; border-top: 1px solid #f6f4ea; padding-left: 3px; position: relative; }
.si { width: 20px; height: 20px; margin-right: 10px; flex: none; position: relative; display: block; }
.si svg { width: 20px; height: 20px; display: block; }
.si.help { margin-left: 4px; margin-right: 16px; }
.si.help b { position: absolute; inset: 0; text-align: center; color: #fff; font: bold 13px/20px "Liberation Sans", sans-serif; }
.msg { font-size: 13px; white-space: nowrap; margin-top: -2px; }
.vlabel { margin-left: auto; margin-right: 9px; font-size: 13px; margin-top: -2px; }
.vbox { width: 200px; height: 24px; margin-right: 5px; background: #efefef; border: 1px solid #a9bbd8; position: relative; }
.wm { position: absolute; left: 24px; top: -10px; font: bold 24px/30px "Liberation Sans", sans-serif; color: #2c2c2c; letter-spacing: -.9px; transform: scaleX(.875); transform-origin: left; white-space: nowrap;
  -webkit-text-stroke: .5px #2c2c2c;
  text-shadow: 0 0 2px #fff, 1px 1px 2px #fff, -1px -1px 2px #fff; }
```
